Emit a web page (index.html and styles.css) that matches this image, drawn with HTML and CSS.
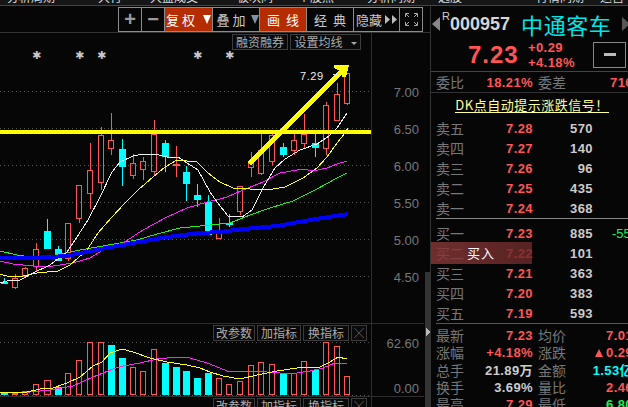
FILE: index.html
```html
<!DOCTYPE html>
<html lang="zh">
<head>
<meta charset="utf-8">
<title>中通客车 K线</title>
<link rel="stylesheet" href="styles.css">
</head>
<body>
<div class="app">
  <div class="topbar">
    <span class="top-item t1">分析周期</span><span class="top-item t2">大行</span><span class="top-item t3">大盘成交</span><span class="top-item t4">板块同</span><span class="top-item t5">个股热</span><span class="top-item t6">分析同期</span><span class="top-item t7">选股</span><span class="top-item t8">行情同期</span><span class="top-item t9">运营</span>
  </div>
  <div class="main">
    <div class="left">
      <div class="toolbar">
        <div class="tool w23 sym">+</div>
        <div class="tool w23 sym">−</div>
        <div class="tool w48 red">复权<i class="tri tri-white"></i></div>
        <div class="tool w47 shifted">叠加<i class="tri tri-blue"></i></div>
        <div class="tool w47 red wide">画线</div>
        <div class="tool w47 wide">经典</div>
        <div class="tool w46 tight">隐藏<svg class="ff" width="12" height="9" viewBox="0 0 12 9"><path d="M0 0l5 4.5-5 4.5zM7 0l5 4.5-5 4.5z"/></svg></div>
        <div class="tool w23">
          <svg width="13" height="13" viewBox="0 0 13 13" class="full"><path d="M0.5 4V0.5H4M9 0.5h3.5V4M12.5 9v3.5H9M4 12.5H0.5V9"/><path d="M1 1l3 3M12 1L9 4M12 12L9 9M1 12l3-3"/></svg>
        </div>
      </div>
      <div class="chart">
        <svg class="plot" width="430" height="374" viewBox="0 33 430 374">
          <g class="grid">
            <path d="M0 91.5H371M0 128.5H371M0 165.5H371M0 202.5H371M0 239.5H371M0 276.5H371M0 342.5H371M0 395.5H371"/>
          </g>
          <path class="rule" d="M0 323.5H424M0 396.5H424M371.5 33V407"/>
          <rect class="strip" x="425" y="272" width="5" height="135"/>
          <path class="strip-arrow" d="M426 327l4 5-4 5z"/>
          <g class="stars">
            <text x="36.500" y="59">✱</text><text x="79.500" y="59">✱</text><text x="101.500" y="59">✱</text><text x="197.500" y="59">✱</text><text x="229.500" y="59">✱</text>
          </g>
          <path class="c-red" d="M15.500 274V278M15.500 287V289M12.500 278h5v9h-5z
          M25.500 267V268M25.500 276V277M22.500 268h5v8h-5z
          M36.500 243V249M36.500 266V271M33.500 249h5v17h-5z
          M68.500 258V261M65.500 223h5v35h-5z
          M79.500 218V223M76.500 185h5v33h-5z
          M90.500 143V170M90.500 193V209M87.500 170h5v23h-5z
          M101.500 127V135M101.500 182V190M98.500 135h5v47h-5z
          M111.500 113V140M111.500 148V155M108.500 140h5v8h-5z
          M133.500 154V163M133.500 175V179M130.500 163h5v12h-5z
          M143.500 157V161M143.500 169V180M140.500 161h5v8h-5z
          M154.500 120V134M154.500 171V176M151.500 134h5v37h-5z
          M176.500 146V177
          M219.500 218V230M216.500 230h5v8h-5z
          M240.500 211V215M237.500 186h5v25h-5z
          M251.500 152V163M251.500 167V177M248.500 163h5v4h-5z
          M261.500 134V150M261.500 173V175M258.500 150h5v23h-5z
          M272.500 134V135M272.500 161V165M269.500 135h5v26h-5z
          M294.500 133V140M294.500 150V155M291.500 140h5v10h-5z
          M304.500 114V134M304.500 143V149M301.500 134h5v9h-5z
          M326.500 102V105M326.500 148V155M323.500 105h5v43h-5z
          M337.500 83V94M334.500 94h5v26h-5z
          M347.500 103V105M344.500 73h5v30h-5z"/>
          <rect class="f-red" x="173" y="164" width="7" height="2"/>
          <g class="c-cyan">
            <path d="M4.500 278V284M47.500 219V249M58.500 246V261M122.500 139V186M165.500 140V172M186.500 166V201M197.500 184V207M208.500 195V235M229.500 214V227M283.500 143V157M315.500 133V157"/>
          </g>
          <g class="f-cyan">
            <rect x="1" y="282" width="7" height="2"/><rect x="44" y="231" width="7" height="18"/><rect x="55" y="249" width="7" height="12"/><rect x="119" y="149" width="7" height="18"/><rect x="162" y="143" width="7" height="14"/><rect x="183" y="172" width="7" height="12"/><rect x="194" y="195" width="7" height="5"/><rect x="205" y="202" width="7" height="33"/><rect x="226" y="223" width="7" height="2"/><rect x="280" y="147" width="7" height="8"/><rect x="312" y="143" width="7" height="5"/>
          </g>
          <polyline class="l-green" points="0,251 17,255 30,257 45,257 80,250 137,240 157,234 180,228 200,226 220,224 230,223 250,215 270,208 293,201 317,189 337,178 347,173"/>
          <polyline class="l-magenta" points="0,261 13,264 33,266 53,266 73,263 90,258 103,250 123,243 143,230 167,217 187,208 207,202 220,199 227,197 243,190 263,182 280,173 303,169 313,171 327,168 337,164 347,161"/>
          <polyline class="l-yellow" points="0,274 10,277 23,276 37,273 58,271 70,265 87,250 98,233 112,217 125,203 138,190 153,177 165,167 177,160 197,162 208,173 220,182 233,188 250,189 267,190 285,187 303,178 317,168 327,157 337,143 345,133 348,128"/>
          <polyline class="l-white" points="0,283 7,281 20,280 33,273 50,265 67,252 77,237 88,220 100,197 112,172 120,162 133,156 143,154 155,154 167,157 178,157 187,163 198,170 210,192 217,202 228,216 242,217 252,210 263,188 275,168 285,159 300,150 317,144 329,136 337,128 347,113"/>
          <polyline class="l-blue" points="0,258 33,258 67,256 100,249 133,243 167,237 200,233 220,232 243,229 277,226 310,220 348,214"/>
          <rect class="f-yellow" x="0" y="130" width="371" height="4"/>
          <path class="arrow" d="M249 164L342 71"/>
          <path class="f-yellow" d="M334 65h15l-3 12h-4l-1-6-7-3z"/>
          <path class="leader" d="M333 75l10-2"/>
          <text class="hi-label" x="300" y="80">7.29</text>
          <g class="axis">
            <text x="419" y="97">7.00</text><text x="419" y="134">6.50</text><text x="419" y="171">6.00</text><text x="419" y="208">5.50</text><text x="419" y="245">5.00</text><text x="419" y="282">4.50</text><text x="419" y="348">62.60</text><text x="419" y="393">0.00</text>
          </g>
          <g class="v-red">
            <rect x="12.500" y="393.500" width="5" height="1"/><rect x="22.500" y="391.500" width="5" height="3"/><rect x="33.500" y="384.500" width="5" height="10"/><rect x="44.500" y="380.500" width="6" height="14"/><rect x="65.500" y="373.500" width="5" height="21"/><rect x="76.500" y="360.500" width="5" height="34"/><rect x="87.500" y="342.500" width="5" height="52"/><rect x="98.500" y="342.500" width="5" height="52"/><rect x="130.500" y="367.500" width="5" height="27"/><rect x="140.500" y="371.500" width="5" height="23"/><rect x="151.500" y="349.500" width="5" height="45"/><rect x="216.500" y="378.500" width="5" height="16"/><rect x="226.500" y="384.500" width="5" height="10"/><rect x="237.500" y="381.500" width="5" height="13"/><rect x="248.500" y="365.500" width="5" height="29"/><rect x="258.500" y="362.500" width="5" height="32"/><rect x="269.500" y="364.500" width="5" height="30"/><rect x="291.500" y="373.500" width="5" height="21"/><rect x="301.500" y="361.500" width="5" height="33"/><rect x="323.500" y="342.500" width="5" height="52"/><rect x="334.500" y="346.500" width="5" height="48"/><rect x="344.500" y="376.500" width="5" height="18"/>
          </g>
          <g class="f-cyan">
            <rect x="1" y="393" width="7" height="2"/><rect x="55" y="387" width="7" height="8"/><rect x="108" y="345" width="7" height="50"/><rect x="119" y="358" width="7" height="37"/><rect x="162" y="363" width="7" height="32"/><rect x="173" y="367" width="7" height="28"/><rect x="183" y="371" width="7" height="24"/><rect x="194" y="378" width="7" height="17"/><rect x="205" y="373" width="7" height="22"/><rect x="280" y="374" width="7" height="21"/><rect x="312" y="370" width="7" height="25"/>
          </g>
          <polyline class="l-magenta" points="0,393 30,392 50,390 73,386 93,377 113,369 123,366 140,363 157,359 177,357 190,358 207,363 220,368 227,371 247,371 267,372 280,373 297,373 310,371 323,368 335,363 347,363"/>
          <polyline class="l-yellow" points="0,393 27,392 40,389 53,388 67,383 80,377 93,366 102,362 110,353 122,349 133,352 150,358 167,362 187,365 200,368 210,372 223,376 240,379 257,375 277,371 297,368 310,367 320,367 330,362 338,357 347,359"/>
        </svg>
        <div class="chip-row chips-top">
          <span class="chip c56">融资融券</span><span class="chip c72">设置均线<i class="drop"></i></span>
        </div>
        <div class="chip-row chips-vol">
          <span class="chip c42">改参数</span><span class="chip c44">加指标</span><span class="chip c46">换指标</span><span class="chip c16 close">╳</span>
        </div>
        <div class="chip-row chips-vol2">
          <span class="chip c42">改参数</span><span class="chip c44">加指标</span><span class="chip c46">换指标</span><span class="chip c16 close">╳</span>
        </div>
      </div>
    </div>
    <div class="panel">
      <div class="head">
        <div class="code-row">
          <i class="nav nav-l"></i>
          <span class="mark">R</span><span class="code">000957</span><span class="name">中通客车</span>
          <i class="nav nav-r"></i>
        </div>
        <div class="price-row">
          <span class="price">7.23</span>
          <div class="change"><span>+0.29</span><span>+4.18%</span></div>
          <div class="minus"><b></b></div>
        </div>
      </div>
      <div class="ratio">
        <span class="lab">委比</span><span class="val red">18.21%</span><span class="lab lab2">委差</span><span class="val red end">716</span>
      </div>
      <div class="notice"><span>DK点自动提示涨跌信号！</span></div>
      <div class="book sell">
        <div class="row"><span class="lab">卖五</span><span class="val red">7.28</span><span class="val vol">570</span></div>
        <div class="row"><span class="lab">卖四</span><span class="val red">7.27</span><span class="val vol">140</span></div>
        <div class="row"><span class="lab">卖三</span><span class="val red">7.26</span><span class="val vol">96</span></div>
        <div class="row"><span class="lab">卖二</span><span class="val red">7.25</span><span class="val vol">435</span></div>
        <div class="row"><span class="lab">卖一</span><span class="val red">7.24</span><span class="val vol">368</span></div>
      </div>
      <div class="book buy">
        <div class="row"><span class="lab">买一</span><span class="val red">7.23</span><span class="val vol">885</span><span class="delta">-55</span></div>
        <div class="row"><span class="lab">买二</span><span class="val red">7.22</span><span class="val vol">101</span><div class="buy-tag">买入</div></div>
        <div class="row"><span class="lab">买三</span><span class="val red">7.21</span><span class="val vol">363</span></div>
        <div class="row"><span class="lab">买四</span><span class="val red">7.20</span><span class="val vol">383</span></div>
        <div class="row"><span class="lab">买五</span><span class="val red">7.19</span><span class="val vol">593</span></div>
      </div>
      <div class="stats">
        <span class="lab">最新</span><span class="val red">7.23</span><span class="lab lab2">均价</span><span class="val red end">7.01</span>
        <span class="lab">涨幅</span><span class="val red">+4.18%</span><span class="lab lab2">涨跌</span><span class="val red end"><i class="up"></i>0.29</span>
        <span class="lab">总手</span><span class="val white">21.89万</span><span class="lab lab2">金额</span><span class="val cyan end">1.53亿</span>
        <span class="lab">换手</span><span class="val white">3.69%</span><span class="lab lab2">量比</span><span class="val red end">2.46</span>
        <span class="lab">最高</span><span class="val red">7.29</span><span class="lab lab2">最低</span><span class="val green end">6.80</span>
      </div>
    </div>
  </div>
</div>
</body>
</html>
```
FILE: styles.css
```css
* { box-sizing: border-box; }
html, body { margin: 0; padding: 0; background: #060606; }
body { width: 628px; height: 407px; overflow: hidden; font-family: "Noto Sans CJK SC", "Liberation Sans", sans-serif; color: #ccc; }
i { display: inline-block; font-style: normal; }
.app { width: 628px; height: 407px; display: flex; flex-direction: column; overflow: hidden; }

.topbar { height: 6px; flex: none; position: relative; overflow: hidden; background: #161616; border-bottom: 1px solid #444; }
.top-item { position: absolute; top: -10px; font-size: 12px; line-height: 14px; color: #ddd; white-space: nowrap; }
.t1 { left: 7px; } .t2 { left: 98px; } .t3 { left: 150px; } .t4 { left: 237px; } .t5 { left: 298px; } .t6 { left: 367px; } .t7 { left: 438px; } .t8 { left: 536px; } .t9 { left: 600px; }

.main { flex: 1; display: flex; min-height: 0; }
.left { width: 430px; flex: none; display: flex; flex-direction: column; }
.toolbar { height: 27px; flex: none; display: flex; align-items: flex-start; padding: 1px 0 0 119px; border-bottom: 1px solid #333; }
.tool { height: 25px; display: flex; align-items: center; justify-content: center; gap: 5px; border: 1px solid #8c8c8c; margin-left: -1px; font-size: 13px; letter-spacing: 3px; color: #c8c8c8; }
.w23 { width: 24px; } .w48 { width: 49px; } .w47 { width: 48px; } .w46 { width: 47px; }
.sym { font-family: "Liberation Sans", sans-serif; font-size: 20px; font-weight: bold; letter-spacing: 0; color: #999; }
.tool.red { background: #b52c00; color: #fff; }
.tool.wide { letter-spacing: 6px; padding-left: 6px; }
.tool.tight { letter-spacing: 0; gap: 3px; }
.tool.shifted { padding-left: 3px; gap: 2px; }
.tri { width: 0; height: 0; border-left: 4px solid transparent; border-right: 4px solid transparent; border-top: 9px solid #fff; margin-left: 0; }
.tri-blue { border-top-color: #7f93a8; }
.ff { fill: #bbb; }
.full { fill: none; stroke: #aaa; stroke-width: 1; }

.chart { position: relative; flex: 1; min-height: 0; }
.plot { display: block; }
.plot * { shape-rendering: crispEdges; }
.grid path { fill: none; stroke: #555; stroke-width: 1; stroke-dasharray: 1 3; }
.rule { fill: none; stroke: #2e2e2e; stroke-width: 1; }
.strip { fill: #333; }
.strip-arrow { fill: #bbb; }
.stars text { font-family: "DejaVu Sans", sans-serif; font-size: 11px; font-weight: bold; fill: #c8c8c8; text-anchor: middle; }
.c-red { fill: none; stroke: #ff5555; stroke-width: 1; }
.f-red { fill: #ff5555; }
.c-cyan path { fill: none; stroke: #00ffff; stroke-width: 1; }
.f-cyan rect { fill: #00ffff; }
.v-red rect { fill: #060606; stroke: #ff5555; stroke-width: 1; }
.l-green, .l-magenta, .l-yellow, .l-white, .l-blue { fill: none; stroke-width: 1; stroke-linejoin: round; }
.l-green { stroke: #22ee22; }
.l-magenta { stroke: #ff22ff; }
.l-yellow { stroke: #ffff22; }
.l-white { stroke: #f0f0f0; }
.l-blue { stroke: #0000ff; stroke-width: 4; }
.f-yellow { fill: #ffff00; }
.arrow { fill: none; stroke: #ffff00; stroke-width: 5; }
.leader { fill: none; stroke: #ddd; stroke-width: 1; }
.hi-label { font-family: "Liberation Sans", sans-serif; font-size: 11px; fill: #f0f0f0; letter-spacing: 0.6px; }
.axis text { font-family: "Liberation Sans", sans-serif; font-size: 13px; fill: #777; text-anchor: end; }

.chip-row { position: absolute; display: flex; gap: 2px; }
.chips-top { left: 232px; top: 1px; }
.chips-vol { left: 213px; top: 292px; }
.chips-vol2 { left: 213px; top: 365px; }
.chip { height: 16px; border: 1px solid #3c3c3c; background: #0a0a0a; font-size: 12px; line-height: 14px; color: #aaa; text-align: center; white-space: nowrap; }
.c56 { width: 56px; } .c72 { width: 71px; } .c42 { width: 42px; } .c44 { width: 44px; } .c46 { width: 46px; } .c16 { width: 16px; }
.close { font-size: 10px; color: #999; }
.drop { width: 0; height: 0; margin-left: 8px; vertical-align: middle; border-left: 3px solid transparent; border-right: 3px solid transparent; border-top: 3px solid #aaa; }

.panel { width: 198px; flex: none; border-left: 1px solid #333; display: flex; flex-direction: column; overflow: hidden; }
.head { height: 66px; flex: none; border-bottom: 1px solid #444; }
.code-row { height: 32px; display: flex; align-items: center; padding: 4px 0 0 1px; white-space: nowrap; }
.nav { width: 0; height: 0; border-top: 7px solid transparent; border-bottom: 7px solid transparent; }
.nav-l { border-right: 8px solid #888; }
.nav-r { border-left: 8px solid #555; margin-left: 11px; }
.mark { align-self: flex-start; font-family: "Liberation Sans", sans-serif; font-size: 11px; line-height: 11px; color: #ccc; margin: 1px 0 0 2px; }
.code { font-family: "Liberation Sans", sans-serif; font-size: 18px; color: #d5d5d5; font-weight: bold; }
.name { font-size: 22px; line-height: 28px; color: #00e5e5; margin-left: 11px; letter-spacing: 0.6px; }
.price-row { height: 33px; display: flex; align-items: center; padding-left: 37px; }
.price { font-family: "Liberation Sans", sans-serif; font-size: 24px; font-weight: bold; color: #ff5555; letter-spacing: 1px; width: 60px; }
.change { display: flex; flex-direction: column; font-family: "Liberation Sans", sans-serif; font-size: 13px; line-height: 15px; font-weight: bold; color: #ff5555; letter-spacing: 0.4px; width: 65px; }
.minus { width: 33px; height: 26px; border: 1px solid #888; display: flex; align-items: center; justify-content: center; }
.minus b { width: 12px; height: 3px; background: #bbb; }

.lab { font-size: 14px; line-height: 17px; color: #777; white-space: nowrap; }
.val { font-family: "Liberation Sans", "Noto Sans CJK SC", sans-serif; font-size: 13px; line-height: 17px; font-weight: bold; letter-spacing: 0.4px; text-align: right; white-space: nowrap; }
.val.red { color: #ff5555; } .val.white { color: #ccc; } .val.cyan { color: #00ffff; } .val.green { color: #22ee55; }
.ratio { height: 21px; flex: none; display: grid; grid-template-columns: 29px 68px 36px 60px; align-items: center; padding-left: 5px; border-bottom: 1px solid #333; }
.ratio .lab2 { padding-left: 5px; }
.ratio .end { margin-right: -4px; }
.notice { height: 23px; flex: none; display: flex; justify-content: center; align-items: center; font-size: 13px; letter-spacing: 0.5px; color: #ffff99; padding-left: 5px; }
.notice span { border-bottom: 1px solid #ffff99; line-height: 15px; }
.book { flex: none; padding-left: 5px; }
.row { height: 20px; display: grid; grid-template-columns: 29px 68px 60px auto; align-items: center; position: relative; }
.val.vol { color: #ccc; }
.delta { font-family: "Liberation Sans", sans-serif; font-size: 13px; color: #22ee55; margin-left: 19px; white-space: nowrap; }
.sell { height: 103px; padding-top: 2px; position: relative; }
.sell::after { content: ""; position: absolute; left: 5px; right: 0; bottom: 0; height: 1px; background: #888; }
.buy { height: 105px; padding-top: 4px; position: relative; }
.buy::after { content: ""; position: absolute; left: 5px; right: 0; bottom: 0; height: 1px; background: #555; }
.buy-tag { position: absolute; left: -5px; top: -1px; width: 101px; height: 22px; background: linear-gradient(90deg, rgba(135, 55, 55, 0.82), rgba(105, 40, 40, 0.82)); color: #fff; font-size: 13px; line-height: 21px; padding-left: 36px; letter-spacing: 1px; }
.stats { flex: none; display: grid; grid-template-columns: 29px 68px 36px 60px; grid-auto-rows: 17.300px; align-items: center; padding: 3px 0 0 5px; }
.stats .lab2 { padding-left: 5px; }
.stats .end { margin-right: -4px; }
.up { width: 0; height: 0; margin-right: 3px; border-left: 4px solid transparent; border-right: 4px solid transparent; border-bottom: 8px solid #ff5555; }
```
